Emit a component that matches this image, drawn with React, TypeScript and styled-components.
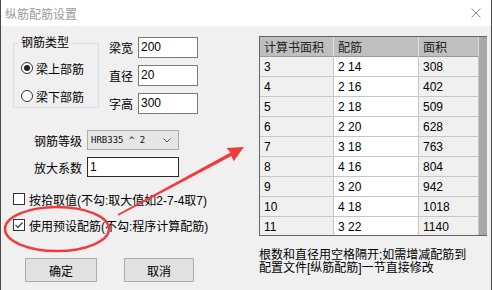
import styled, { createGlobalStyle } from "styled-components";

const GlobalStyle = createGlobalStyle`
  html, body { margin: 0; padding: 0; background: #f0f0f0; }
  body {
    font-family: "Liberation Sans", "Noto Sans CJK SC", sans-serif;
    font-size: 12px;
    color: #000;
  }
  * { box-sizing: border-box; }
`;

const rows = [
  ["3", "2 14", "308"],
  ["4", "2 16", "402"],
  ["5", "2 18", "509"],
  ["6", "2 20", "628"],
  ["7", "3 18", "763"],
  ["8", "4 16", "804"],
  ["9", "3 20", "942"],
  ["10", "4 18", "1018"],
  ["11", "3 22", "1140"],
];

export default function App() {
  return (
    <Screen>
      <GlobalStyle />
      <Window>
        <TitleBar>
          <Title>纵筋配筋设置</Title>
          <svg width="10" height="10" viewBox="0 0 10 10">
            <path d="M0.5 0.5 L9.5 9.5 M9.5 0.5 L0.5 9.5" stroke="#8a8a8a" strokeWidth="1" fill="none" />
          </svg>
        </TitleBar>
        <Body>
          <LeftPanel>
            <TopSection>
              <GroupBox>
                <Legend>钢筋类型</Legend>
                <RadioRow $first>
                  <Radio $checked />
                  <span>梁上部筋</span>
                </RadioRow>
                <RadioRow>
                  <Radio />
                  <span>梁下部筋</span>
                </RadioRow>
              </GroupBox>
              <Fields>
                <FieldRow>
                  <FieldLabel>梁宽</FieldLabel>
                  <TextBox $width={60}>200</TextBox>
                </FieldRow>
                <FieldRow>
                  <FieldLabel>直径</FieldLabel>
                  <TextBox $width={60}>20</TextBox>
                </FieldRow>
                <FieldRow>
                  <FieldLabel>字高</FieldLabel>
                  <TextBox $width={60}>300</TextBox>
                </FieldRow>
              </Fields>
            </TopSection>

            <OptionRow $top={16}>
              <OptionLabel>钢筋等级</OptionLabel>
              <Combo>
                <ComboText>HRB335 ^ 2</ComboText>
                <svg width="8" height="5" viewBox="0 0 8 5">
                  <path d="M0.5 0.5 L4 4 L7.5 0.5" stroke="#555" strokeWidth="1" fill="none" />
                </svg>
              </Combo>
            </OptionRow>
            <OptionRow $top={7}>
              <OptionLabel>放大系数</OptionLabel>
              <TextBox $width={92} $dark>1</TextBox>
            </OptionRow>

            <CheckRow $top={14}>
              <CheckBox />
              <span>按拾取值(不勾:取大值如2-7-4取7)</span>
            </CheckRow>
            <CheckRow $top={10}>
              <CheckBox>
                <svg width="10" height="10" viewBox="0 0 10 10">
                  <path d="M1.5 5 L4 7.5 L8.5 2.5" stroke="#444" strokeWidth="1.3" fill="none" />
                </svg>
              </CheckBox>
              <span>使用预设配筋(不勾:程序计算配筋)</span>
            </CheckRow>

            <ButtonRow>
              <Button $width={72}>确定</Button>
              <Button $width={70}>取消</Button>
            </ButtonRow>
          </LeftPanel>

          <RightPanel>
            <TableFrame>
              <Grid>
                <HeadCell>计算书面积</HeadCell>
                <HeadCell>配筋</HeadCell>
                <HeadCell>面积</HeadCell>
                {rows.map((r) => [
                  <Cell key={r[0] + "a"}>{r[0]}</Cell>,
                  <Cell key={r[0] + "b"} $white>{r[1]}</Cell>,
                  <Cell key={r[0] + "c"}>{r[2]}</Cell>,
                ])}
              </Grid>
              <ScrollStrip />
            </TableFrame>
            <Note>
              根数和直径用空格隔开;如需增减配筋到
              <br />
              配置文件[纵筋配筋]一节直接修改
            </Note>
          </RightPanel>
        </Body>
      </Window>

      <Annotation width="492" height="290" viewBox="0 0 492 290">
        <ellipse cx="57" cy="229" rx="52" ry="22" stroke="#f03c3c" strokeWidth="2.5" fill="none" />
        <polygon
          points="117.6,214.3 230.5,152.5 226.4,148 244,147 233.6,161.2 231.5,155.9 118.4,215.7"
          fill="#f23b3b"
        />
      </Annotation>
    </Screen>
  );
}

const Screen = styled.div`
  position: relative;
  width: 492px;
  height: 290px;
  overflow: hidden;
`;

const Window = styled.div`
  width: 492px;
  height: 290px;
  border-left: 1px solid #4a4a4a;
  border-right: 1px solid #4a4a4a;
  background: #f0f0f0;
  display: flex;
  flex-direction: column;
`;

const TitleBar = styled.div`
  height: 26px;
  background: #fff;
  display: flex;
  align-items: center;
  justify-content: space-between;
  padding: 0 10px 0 4px;
`;

const Title = styled.span`
  color: #9a9a9a;
  font-size: 12px;
`;

const Body = styled.div`
  display: flex;
  flex: 1;
`;

const LeftPanel = styled.div`
  width: 258px;
  padding: 9px 0 0 12px;
  display: flex;
  flex-direction: column;
`;

const TopSection = styled.div`
  display: flex;
  align-items: flex-start;
`;

const GroupBox = styled.fieldset`
  margin: 0;
  padding: 0 0 3px 4px;
  width: 86px;
  min-width: 0;
  border: 1px solid #dcdcdc;
`;

const Legend = styled.legend`
  padding: 0 3px;
  line-height: 16px;
  font-size: 12px;
`;

const RadioRow = styled.div<{ $first?: boolean }>`
  display: flex;
  align-items: center;
  gap: 3px;
  height: 16px;
  margin: ${(p) => (p.$first ? "9px" : "12px")} 0 0 3px;
`;

const Radio = styled.span<{ $checked?: boolean }>`
  width: 12px;
  height: 12px;
  border-radius: 50%;
  border: 1px solid #333;
  background: #fff;
  display: flex;
  align-items: center;
  justify-content: center;
  &::after {
    content: "";
    width: 6px;
    height: 6px;
    border-radius: 50%;
    background: ${(p) => (p.$checked ? "#222" : "transparent")};
  }
`;

const Fields = styled.div`
  margin-left: 10px;
  padding-top: 2px;
  display: flex;
  flex-direction: column;
  gap: 7px;
`;

const FieldRow = styled.div`
  display: flex;
  align-items: center;
  height: 21px;
`;

const FieldLabel = styled.span`
  width: 29px;
`;

const TextBox = styled.div<{ $width: number; $dark?: boolean }>`
  width: ${(p) => p.$width}px;
  height: ${(p) => (p.$dark ? 20 : 21)}px;
  border: 1px solid ${(p) => (p.$dark ? "#2a2a2a" : "#7a7a7a")};
  background: #fff;
  padding-left: 2px;
  line-height: ${(p) => (p.$dark ? 18 : 19)}px;
  font-size: 12px;
`;

const OptionRow = styled.div<{ $top: number }>`
  display: flex;
  align-items: center;
  height: 20px;
  margin-top: ${(p) => p.$top}px;
  padding-left: 21px;
`;

const OptionLabel = styled.span`
  width: 53px;
`;

const Combo = styled.div`
  width: 92px;
  height: 20px;
  background: #e5e5e5;
  border: 1px solid #adadad;
  display: flex;
  align-items: center;
  justify-content: space-between;
  padding: 0 7px 0 3px;
`;

const ComboText = styled.span`
  font-family: "DejaVu Sans Mono", monospace;
  font-size: 9px;
  color: #111;
`;

const CheckRow = styled.div<{ $top: number }>`
  display: flex;
  align-items: center;
  gap: 4px;
  height: 16px;
  margin-top: ${(p) => p.$top}px;
`;

const CheckBox = styled.span`
  width: 12px;
  height: 12px;
  border: 1px solid #333;
  background: #fff;
  display: flex;
  align-items: center;
  justify-content: center;
`;

const ButtonRow = styled.div`
  display: flex;
  gap: 27px;
  margin-top: 25px;
  padding-left: 12px;
`;

const Button = styled.div<{ $width: number }>`
  width: ${(p) => p.$width}px;
  height: 24px;
  background: #e1e1e1;
  border: 1px solid #adadad;
  display: flex;
  align-items: center;
  justify-content: center;
`;

const RightPanel = styled.div`
  padding-top: 10px;
  display: flex;
  flex-direction: column;
`;

const TableFrame = styled.div`
  width: 228px;
  height: 200px;
  border-top: 1px solid #646464;
  border-left: 1px solid #646464;
  border-bottom: 1px solid #646464;
  display: flex;
  overflow: hidden;
  background: #fff;
`;

const Grid = styled.div`
  display: grid;
  grid-template-columns: 74px 85px 60px;
  grid-auto-rows: 20px;
  align-content: start;
`;

const HeadCell = styled.div`
  background: #bfbfbf;
  border-right: 1px solid #dedede;
  border-bottom: 1px solid #9a9a9a;
  padding-left: 4px;
  display: flex;
  align-items: center;
  color: #222;
`;

const Cell = styled.div<{ $white?: boolean }>`
  background: ${(p) => (p.$white ? "#fff" : "#f0f0f0")};
  border-right: 1px solid #c6c6c6;
  border-bottom: 1px solid #c6c6c6;
  padding-left: 4px;
  display: flex;
  align-items: center;
  font-size: 12px;
`;

const ScrollStrip = styled.div`
  flex: 1;
  background: #a7a7a7;
`;

const Note = styled.div`
  margin-top: 13px;
  line-height: 13px;
  font-size: 12px;
  white-space: nowrap;
`;

const Annotation = styled.svg`
  position: absolute;
  top: 0;
  left: 0;
  pointer-events: none;
`;
